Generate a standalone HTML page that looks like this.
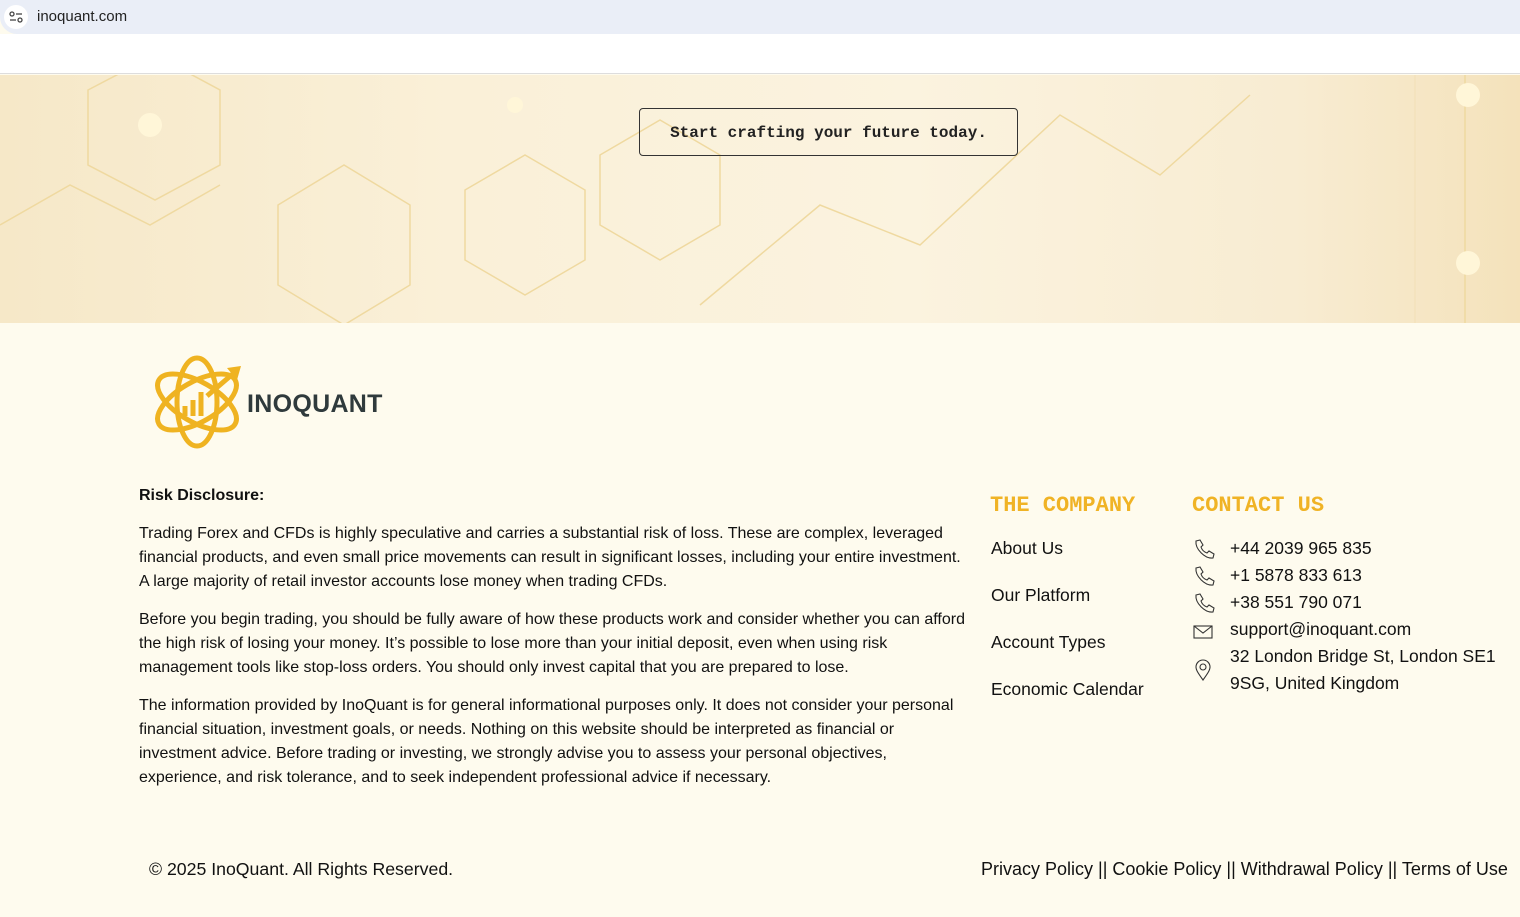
<!DOCTYPE html>
<html><head><meta charset="utf-8"><style>
*{margin:0;padding:0;box-sizing:border-box}
body{width:1520px;height:917px;overflow:hidden;background:#fefbee;font-family:"Liberation Sans",sans-serif;color:#111;position:relative}
.bar{position:absolute;left:0;top:0;width:1520px;height:34px;background:#eaeef7;border-radius:0 0 0 17px}
.bar .ic{position:absolute;left:4px;top:5px;width:24px;height:24px;border-radius:50%;background:#fff}
.bar span{position:absolute;left:37px;top:8px;font-size:15px;color:#222}
.white{position:absolute;top:34px;left:0;width:1520px;height:40px;background:#fff;border-bottom:1px solid #ddd}
.banner{position:absolute;top:75px;left:0;width:1520px;height:248px;background:linear-gradient(90deg,#f6e8c8 0%,#faf0d8 30%,#fbf3df 60%,#f8ecd2 85%,#f4e2bb 100%);overflow:hidden}
.btn{position:absolute;left:639px;top:108px;width:379px;height:48px;border:1px solid #333;border-radius:4px;font-family:"Liberation Mono",monospace;font-weight:bold;font-size:16px;text-align:center;line-height:48px;color:#222}
.logo{position:absolute;left:155px;top:354px}
.logotext{position:absolute;left:247px;top:390px;font-size:25px;font-weight:bold;color:#2f3a3c;letter-spacing:0.3px}
.risk{position:absolute;left:139px;top:484px;width:830px;font-size:16px;line-height:24px;color:#111}
.risk p{margin-bottom:14px}
h3{position:absolute;font-family:"Liberation Mono",monospace;font-weight:bold;font-size:22px;color:#f0b325;top:493px}
.links div{position:absolute;left:991px;font-size:17.5px}
.ct{position:absolute;left:1230px;font-size:17.5px;line-height:27px}
.ci{position:absolute;left:1192px}
.foot{position:absolute;top:859px;font-size:18px}
</style></head><body>
<div class="bar"><div class="ic"><svg width="24" height="24" viewBox="0 0 24 24" fill="none" stroke="#444" stroke-width="1.3"><circle cx="8" cy="9" r="2"/><line x1="12" y1="9" x2="18" y2="9"/><circle cx="16" cy="15" r="2"/><line x1="6" y1="15" x2="12" y2="15"/></svg></div><span>inoquant.com</span></div>
<div class="white"></div>
<div class="banner"><svg width="1520" height="248" fill="none" stroke="#efd9a0" stroke-width="1.5">
<polygon points="88,15 155,-20 220,15 220,90 155,125 88,90"/><polygon points="278,130 344,90 410,130 410,210 344,250 278,210"/><polygon points="465,115 525,80 585,115 585,185 525,220 465,185"/><polygon points="600,80 660,45 720,80 720,150 660,185 600,150"/><polyline points="0,150 70,110 150,150 220,110"/><polyline points="700,230 820,130 920,170 1060,40 1160,100 1250,20"/><line x1="1465" y1="0" x2="1465" y2="248"/><line x1="1415" y1="0" x2="1415" y2="248" stroke="#f4e2bb"/>
<circle cx="150" cy="50" r="12" fill="#fff6d8" stroke="none"/><circle cx="515" cy="30" r="8" fill="#fff6d8" stroke="none"/><circle cx="1468" cy="20" r="12" fill="#fff6d8" stroke="none"/><circle cx="1468" cy="188" r="12" fill="#fff6d8" stroke="none"/></svg></div>
<div class="btn">Start crafting your future today.</div>
<svg class="logo" width="90" height="98" viewBox="0 0 90 98" fill="none" stroke="#efb321" stroke-width="5">
<ellipse cx="42" cy="48" rx="20" ry="44"/><ellipse cx="42" cy="48" rx="20" ry="44" transform="rotate(60 42 48)"/><ellipse cx="42" cy="48" rx="20" ry="44" transform="rotate(-60 42 48)"/>
<line x1="30" y1="62" x2="30" y2="52"/><line x1="38" y1="62" x2="38" y2="46"/><line x1="46" y1="62" x2="46" y2="38"/><line x1="52" y1="42" x2="80" y2="18"/><polygon points="86,12 72,14 82,26" fill="#efb321" stroke="none"/></svg>
<div class="logotext">INOQUANT</div>
<div class="risk"><p style="font-weight:bold;margin-bottom:14px">Risk Disclosure:</p>
<p>Trading Forex and CFDs is highly speculative and carries a substantial risk of loss. These are complex, leveraged financial products, and even small price movements can result in significant losses, including your entire investment. A large majority of retail investor accounts lose money when trading CFDs.</p>
<p>Before you begin trading, you should be fully aware of how these products work and consider whether you can afford the high risk of losing your money. It’s possible to lose more than your initial deposit, even when using risk management tools like stop-loss orders. You should only invest capital that you are prepared to lose.</p>
<p>The information provided by InoQuant is for general informational purposes only. It does not consider your personal financial situation, investment goals, or needs. Nothing on this website should be interpreted as financial or investment advice. Before trading or investing, we strongly advise you to assess your personal objectives, experience, and risk tolerance, and to seek independent professional advice if necessary.</p></div>
<h3 style="left:990px">THE COMPANY</h3><h3 style="left:1192px">CONTACT US</h3>
<div class="links"><div style="top:538px">About Us</div><div style="top:585px">Our Platform</div><div style="top:632px">Account Types</div><div style="top:679px">Economic Calendar</div></div>
<div class="ct" style="top:535px">+44 2039 965 835<br>+1 5878 833 613<br>+38 551 790 071<br>support@inoquant.com<br>32 London Bridge St, London SE1<br>9SG, United Kingdom</div>
<svg class="ci" style="top:538px" width="24" height="150" fill="none" stroke="#333" stroke-width="1.1">
<path id="ph" d="M4 3 L8 2 L11 7 L9 9 C10 12 12 14 15 15 L17 13 L22 16 L21 20 C13 21 3 11 4 3Z"/>
<use href="#ph" y="27"/><use href="#ph" y="54"/>
<rect x="2" y="88" width="18" height="12"/><polyline points="2,88 11,95 20,88"/>
<path d="M11 142 C6 135 4 132 4 129 A7 7 0 0 1 18 129 C18 132 16 135 11 142Z"/><circle cx="11" cy="129" r="3"/></svg>
<div class="foot" style="left:149px;font-size:17.7px">© 2025 InoQuant. All Rights Reserved.</div>
<div class="foot" style="left:981px">Privacy Policy || Cookie Policy || Withdrawal Policy || Terms of Use</div>
</body></html>
